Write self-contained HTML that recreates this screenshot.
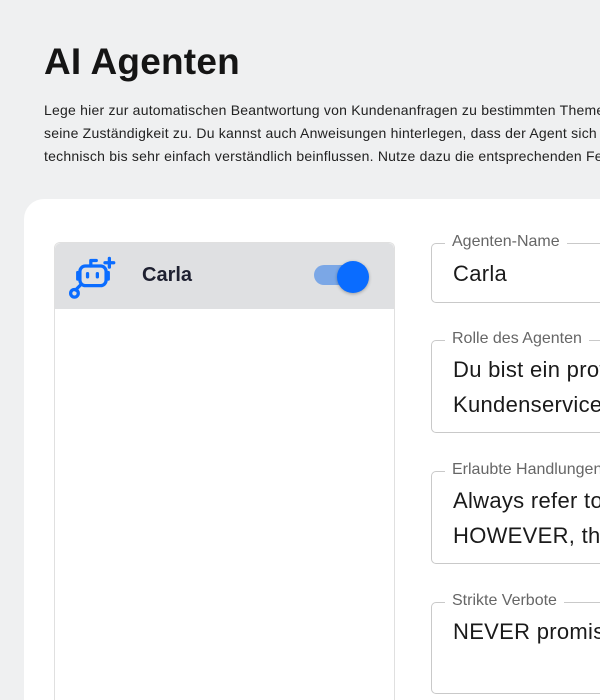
<!DOCTYPE html>
<html><head><meta charset="utf-8"><style>
*{margin:0;padding:0;box-sizing:border-box}
html,body{width:600px;height:700px;overflow:hidden}
body{background:#eff0f1;font-family:"Liberation Sans",sans-serif;color:#1a1a1a;position:relative}
h1{position:absolute;left:44px;top:41px;font-size:37px;font-weight:bold;letter-spacing:0.2px;color:#151515}
.desc{position:absolute;left:44px;top:99px;width:556px;overflow:hidden;font-size:14px;line-height:23px;white-space:nowrap;color:#222;letter-spacing:0.22px}
.card{position:absolute;left:24px;top:199px;width:576px;height:501px;background:#fff;border-radius:20px 0 0 0}
.list{position:absolute;left:54px;top:242px;width:341px;height:458px;border:1px solid #e0e0e0;border-bottom:none;border-radius:6px 6px 0 0}
.head{height:66px;background:#dfe0e2;border-radius:6px 6px 0 0;position:relative}
.name{position:absolute;left:87px;top:21px;font-size:20px;font-weight:bold;color:#1e2030}
.tog{position:absolute;left:259px;top:22px;width:48px;height:20px;border-radius:10px;background:#7ba7e6}
.knob{position:absolute;left:282px;top:18px;width:32px;height:32px;border-radius:50%;background:#0a6cff;box-shadow:0 1px 3px rgba(0,0,0,.3)}
.f{position:absolute;left:431px;width:169px;overflow:visible;border:1px solid #c9c9c9;border-right:none;border-radius:5px 0 0 5px}
.f .l{position:absolute;left:13px;top:-11px;background:#fff;padding:0 7px;font-size:16px;color:#666;white-space:nowrap;max-width:156px;overflow:hidden}
.f .v{position:absolute;left:21px;font-size:22px;line-height:35px;color:#1a1a1a;white-space:nowrap;letter-spacing:0.3px;width:147px;overflow:hidden}
</style></head><body>
<h1>AI Agenten</h1>
<div class="desc">Lege hier zur automatischen Beantwortung von Kundenanfragen zu bestimmten Themen einen AI Agenten an und weise<br>seine Zuständigkeit zu. Du kannst auch Anweisungen hinterlegen, dass der Agent sich daran hält. Den Sprachstil<br>technisch bis sehr einfach verständlich beinflussen. Nutze dazu die entsprechenden Felder.</div>
<div class="card"></div>
<div class="list"><div class="head">
<svg style="position:absolute;left:14px;top:12px" width="48" height="46" viewBox="0 0 44 42" fill="none" stroke="#0a6cff" stroke-width="3" stroke-linecap="round" stroke-linejoin="round">
<rect x="10" y="10" width="24" height="18" rx="5"/><path d="M20 10V5h5"/><path d="M37 3v8M33 7h8"/><path d="M17 17v3M26 17v3"/><path d="M8 16v6M36 16v6"/><path d="M10 28l-4 4"/><circle cx="5" cy="35" r="3.5"/></svg>
<div class="name">Carla</div><div class="tog"></div><div class="knob"></div></div></div>
<div class="f" style="top:243px;height:60px"><div class="l">Agenten-Name</div><div class="v" style="top:12px">Carla</div></div>
<div class="f" style="top:340px;height:93px"><div class="l">Rolle des Agenten</div><div class="v" style="top:11px">Du bist ein professioneller<br>Kundenservice</div></div>
<div class="f" style="top:471px;height:93px"><div class="l">Erlaubte Handlungen</div><div class="v" style="top:11px">Always refer to<br>HOWEVER, the</div></div>
<div class="f" style="top:602px;height:92px"><div class="l">Strikte Verbote</div><div class="v" style="top:11px">NEVER promise</div></div>
</body></html>
